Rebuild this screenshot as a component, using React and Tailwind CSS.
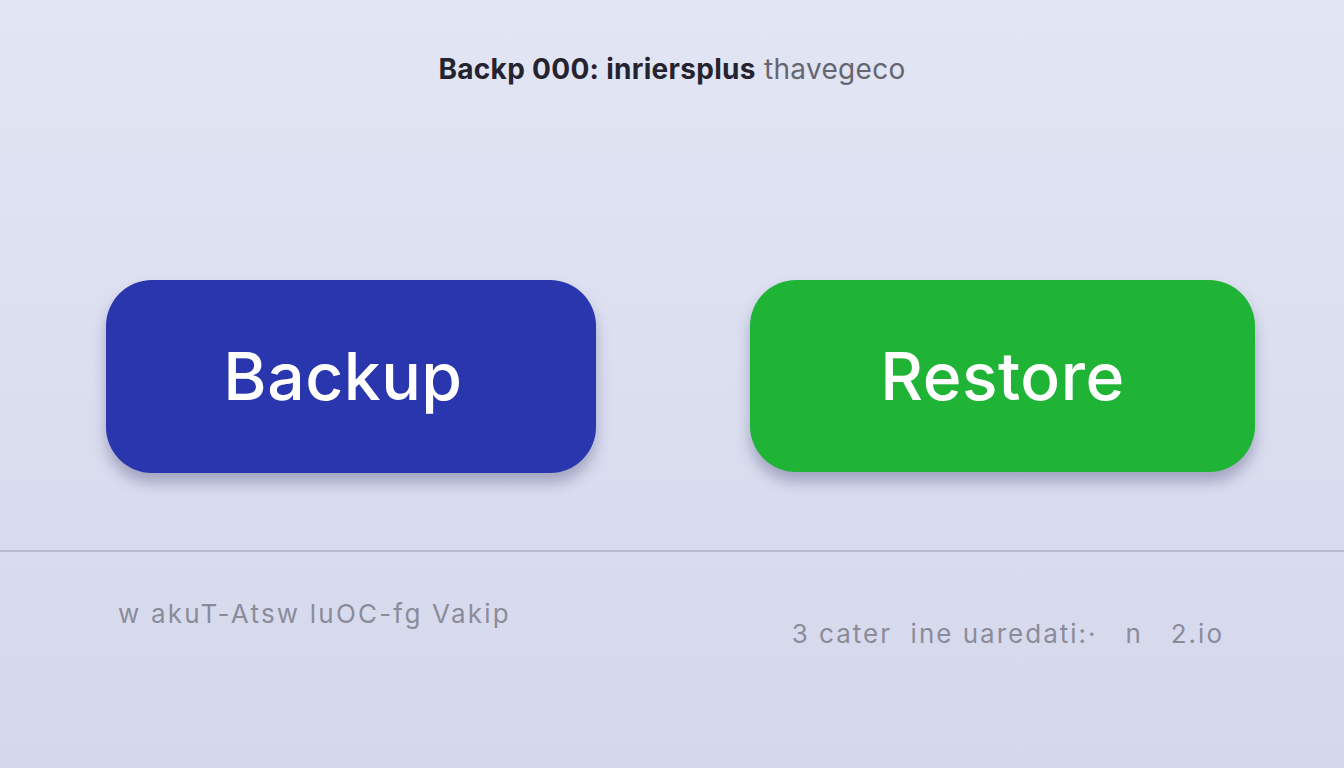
import React from 'react';

const font = { fontFamily: '"Inter", "Noto Sans", sans-serif' };

function BigButton({ label, className }) {
    return (
        <button
            type="button"
            className={`flex items-center justify-center rounded-[46px] text-white text-[66px] font-medium tracking-[0.5px] shadow-[0_10px_14px_rgba(60,64,110,0.35)] ${className}`}
        >
            {label}
        </button>
    );
}

export default function App() {
    return (
        <div
            className="h-[768px] w-full overflow-hidden bg-gradient-to-b from-[#e2e5f3] to-[#d5d8ec]"
            style={font}
        >
            {/* Header */}
            <div className="pt-[50px] text-center text-[28px] leading-[38px] tracking-[0.3px]">
                <span className="font-bold text-[#25232f]">Backp 000: inriersplus</span>{' '}
                <span className="text-[#666672]">thavegeco</span>
            </div>

            {/* Buttons */}
            <div className="mt-[192px] flex justify-between pl-[106px] pr-[89px]">
                <BigButton label="Backup" className="h-[193px] w-[490px] bg-[#2a36ae] pr-[16px]" />
                <BigButton label="Restore" className="h-[192px] w-[505px] bg-[#1fb436]" />
            </div>

            {/* Divider */}
            <div className="mt-[77px] h-[2px] bg-[#b9bcd1]" />

            {/* Footer captions */}
            <div className="flex justify-between pl-[118px] pr-[120px] text-[26px] text-[#8a8c9a] whitespace-pre">
                <p className="mt-[44px] leading-[36px] tracking-[2.2px]">w akuT-Atsw luOC-fg Vakip</p>
                <p className="mt-[64px] leading-[36px] tracking-[2px]">3 cater  ine uaredati:·   n   2.io</p>
            </div>
        </div>
    );
}
